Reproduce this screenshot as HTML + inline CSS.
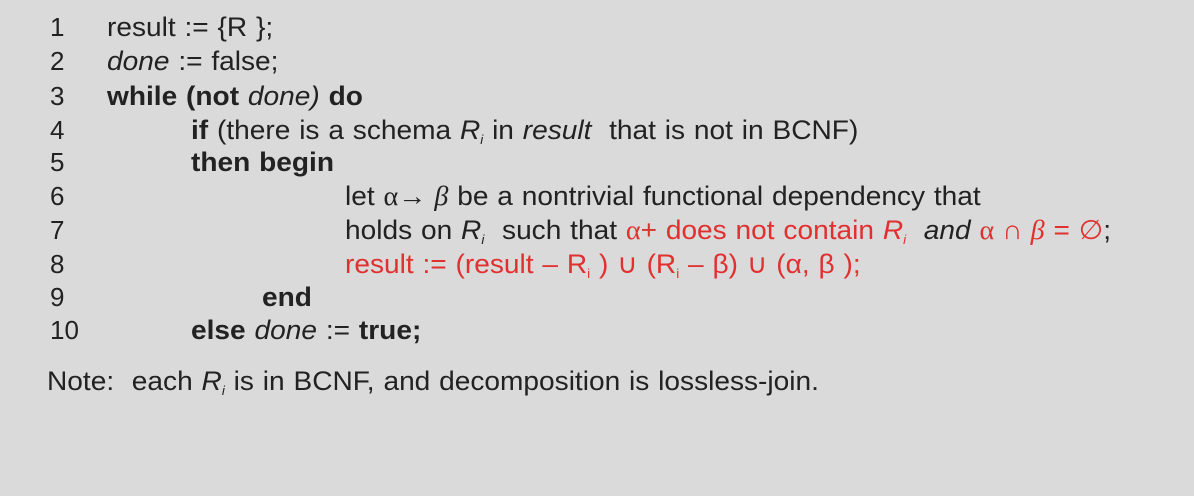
<!DOCTYPE html>
<html><head><meta charset="utf-8"><style>
body{margin:0;width:1194px;height:496px;background:#dadada;overflow:hidden;font-family:"Liberation Sans",Arial,sans-serif;color:#222;}
.l{position:absolute;font-size:27px;line-height:30px;white-space:nowrap;word-spacing:1px;transform:scaleX(1.04);transform-origin:0 0}
.n{position:absolute;font-size:26px;line-height:30px;}
.r{color:#e0302f}
sub{font-size:13px;vertical-align:-5px}
.g{font-family:"Liberation Serif",serif}
</style></head><body>
<div class="n" style="left:50px;top:12px">1</div>
<div class="n" style="left:50px;top:46px">2</div>
<div class="n" style="left:50px;top:81px">3</div>
<div class="n" style="left:50px;top:115px">4</div>
<div class="n" style="left:50px;top:147px">5</div>
<div class="n" style="left:50px;top:181px">6</div>
<div class="n" style="left:50px;top:215px">7</div>
<div class="n" style="left:50px;top:249px">8</div>
<div class="n" style="left:50px;top:282px">9</div>
<div class="n" style="left:50px;top:315px">10</div>
<div class="l" style="left:107px;top:12px">result := {R };</div>
<div class="l" style="left:107px;top:46px"><i>done</i> := false;</div>
<div class="l" style="left:107px;top:81px"><b>while (not</b> <i>done)</i> <b>do</b></div>
<div class="l" style="left:191px;top:115px"><b>if</b> (there is a schema <i>R<sub>i</sub></i> in <i>result</i>&nbsp; that is not in BCNF)</div>
<div class="l" style="left:191px;top:147px"><b>then begin</b></div>
<div class="l" style="left:345px;top:181px">let <span class="g">α→ <i>β</i></span> be a nontrivial functional dependency that</div>
<div class="l" style="left:345px;top:215px">holds on <i>R<sub>i</sub></i>&nbsp; such that <span class="r"><span class="g">α</span>+ does not contain <i>R<sub>i</sub></i>&nbsp; <i style="color:#222">and</i> <span class="g">α ∩ <i>β</i></span> = ∅</span>;</div>
<div class="l r" style="left:345px;top:249px">result := (result – R<sub>i</sub> ) ∪ (R<sub>i</sub> – β) ∪ (α, β );</div>
<div class="l" style="left:262px;top:282px"><b>end</b></div>
<div class="l" style="left:191px;top:315px"><b>else</b> <i>done</i> := <b>true;</b></div>
<div class="l" style="left:47px;top:366px">Note:&nbsp; each <i>R<sub>i</sub></i> is in BCNF, and decomposition is lossless-join.</div>
</body></html>
